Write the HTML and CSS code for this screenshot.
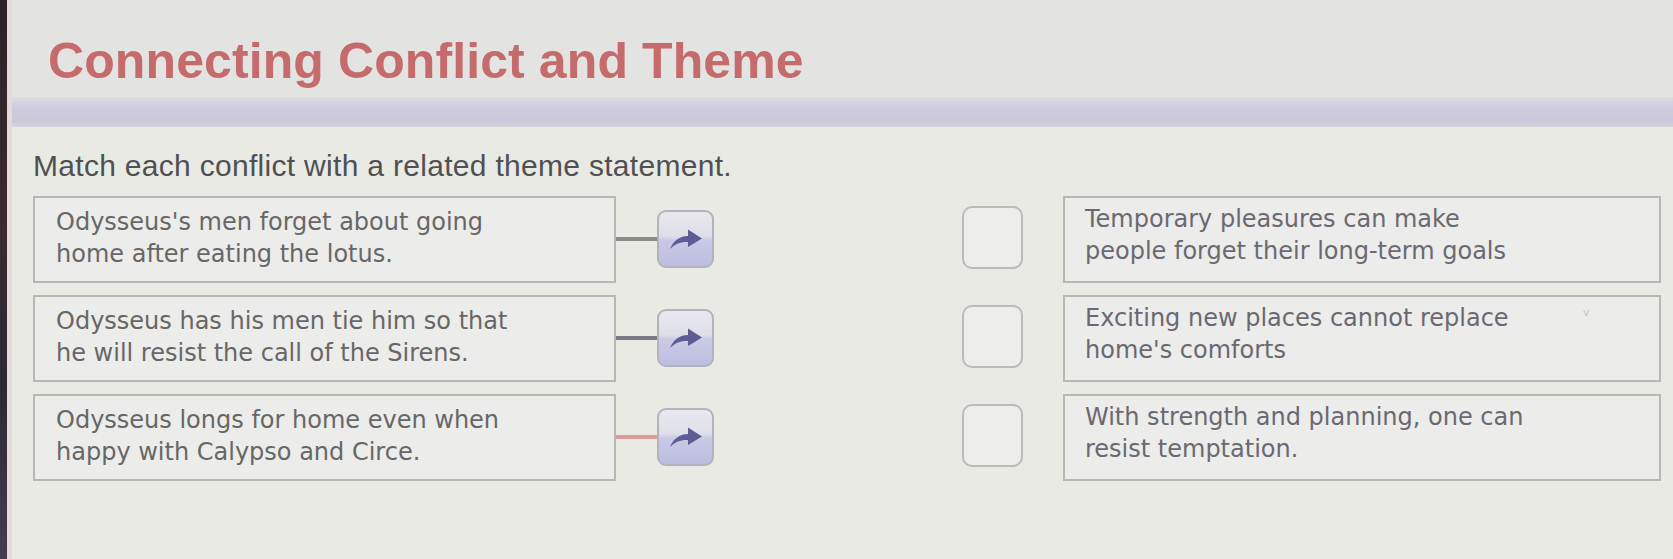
FILE: index.html
```html
<!DOCTYPE html>
<html lang="en">
<head>
<meta charset="utf-8">
<title>Connecting Conflict and Theme</title>
<link rel="stylesheet" href="styles.css">
</head>
<body>
<div class="bezel"></div>
<div class="screen">
  <header class="top">
    <h1 class="title">Connecting Conflict and Theme</h1>
  </header>
  <div class="band"></div>
  <main class="content">
    <p class="prompt">Match each conflict with a related theme statement.</p>
    <div class="rows">
      <div class="row">
        <div class="term">Odysseus's men forget about going<br>home after eating the lotus.</div>
        <span class="wire"></span>
        <button class="arrow" type="button"><svg viewBox="0 0 34 22" width="34" height="22"><path d="M1 21 C4 13 10 8.5 19 8 L19 1.5 L33 10.5 L19 19 L19 14 C11.5 13.6 6 16 1 21 Z"/></svg></button>
        <div class="slot"></div>
        <div class="def">Temporary pleasures can make<br>people forget their long-term goals</div>
      </div>
      <div class="row">
        <div class="term">Odysseus has his men tie him so that<br>he will resist the call of the Sirens.</div>
        <span class="wire wire-dark"></span>
        <button class="arrow" type="button"><svg viewBox="0 0 34 22" width="34" height="22"><path d="M1 21 C4 13 10 8.5 19 8 L19 1.5 L33 10.5 L19 19 L19 14 C11.5 13.6 6 16 1 21 Z"/></svg></button>
        <div class="slot"></div>
        <div class="def">Exciting new places cannot replace<br>home's comforts<span class="mark">v</span></div>
      </div>
      <div class="row">
        <div class="term">Odysseus longs for home even when<br>happy with Calypso and Circe.</div>
        <span class="wire wire-red"></span>
        <button class="arrow" type="button"><svg viewBox="0 0 34 22" width="34" height="22"><path d="M1 21 C4 13 10 8.5 19 8 L19 1.5 L33 10.5 L19 19 L19 14 C11.5 13.6 6 16 1 21 Z"/></svg></button>
        <div class="slot"></div>
        <div class="def">With strength and planning, one can<br>resist temptation.</div>
      </div>
    </div>
  </main>
</div>
</body>
</html>
```

FILE: styles.css
```css
* { box-sizing: border-box; }

html, body {
  margin: 0;
  padding: 0;
  height: 100%;
}

body {
  display: flex;
  width: 1673px;
  height: 559px;
  overflow: hidden;
  background: #e8e8e3;
  font-family: "Liberation Sans", Arial, sans-serif;
}

.bezel {
  width: 7px;
  flex: none;
  background: linear-gradient(180deg, #2a2226 0%, #3a2a30 40%, #2c2a34 70%, #463c50 100%);
}

.screen {
  flex: 1;
  display: flex;
  flex-direction: column;
  border-left: 5px solid #e6d9d9;
  background: #e9e9e4;
}

.top {
  height: 97px;
  padding: 31px 0 0 36px;
  background: #e3e3e2;
}

.title {
  margin: 0;
  font-size: 50px;
  line-height: 60px;
  font-weight: bold;
  color: #c66b6b;
  letter-spacing: 0.1px;
}

.band {
  height: 30px;
  background: linear-gradient(180deg, #dcdbe3 0%, #cfcddf 35%, #c9c8d9 80%, #d6d5dc 100%);
}

.content {
  flex: 1;
  padding: 21px 0 0 21px;
  background: #eaeae5;
}

.prompt {
  margin: 0 0 12px 0;
  font-size: 30px;
  line-height: 36px;
  color: #505052;
  letter-spacing: 0.3px;
}

.rows {
  display: flex;
  flex-direction: column;
  gap: 12px;
}

.row {
  display: flex;
  align-items: center;
  height: 87px;
}

.term,
.def {
  height: 87px;
  border: 2px solid #b7b7b4;
  background: #ececea;
  font-family: "DejaVu Sans", Verdana, sans-serif;
  font-size: 24px;
  line-height: 32px;
  color: #676767;
}

.term {
  width: 583px;
  padding: 8px 10px 0 21px;
}

.def {
  position: relative;
  width: 598px;
  margin-left: 40px;
  padding: 5px 10px 0 20px;
  color: #6a6972;
}

.wire {
  width: 41px;
  height: 4px;
  margin-top: -2px;
  background: #8b8b8b;
}

.wire-dark { background: #777a84; }
.wire-red { background: #e09c9c; }

.arrow {
  width: 57px;
  height: 58px;
  padding: 0;
  margin: -2px 0 0 0;
  border: 2px solid #b3b3bf;
  border-radius: 9px;
  background: linear-gradient(180deg, #e8e8ed 0%, #dfdfe9 44%, #cacae6 52%, #bdbde0 100%);
  display: flex;
  align-items: center;
  justify-content: center;
}

.arrow svg {
  display: block;
  fill: #5d5c94;
}

.slot {
  width: 61px;
  height: 63px;
  margin: -4px 0 0 248px;
  border: 2px solid #bbbbb9;
  border-radius: 10px;
  background: #ededeb;
}

.mark {
  position: absolute;
  top: 10px;
  left: 518px;
  font-size: 11px;
  line-height: 11px;
  color: #c4c4c8;
}
```
